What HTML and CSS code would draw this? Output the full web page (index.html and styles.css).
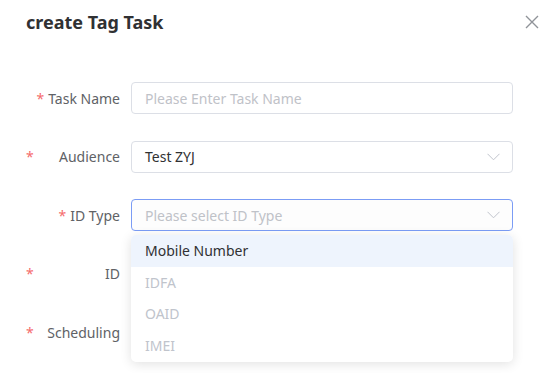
FILE: index.html
```html
<!DOCTYPE html>
<html lang="en">
<head>
<meta charset="utf-8">
<title>create Tag Task</title>
<link rel="stylesheet" href="styles.css">
</head>
<body>
<div class="dialog">
  <div class="dialog-header">
    <h2 class="dialog-title">create Tag Task</h2>
    <button class="dialog-close" aria-label="Close">
      <svg width="14" height="14" viewBox="0 0 14 14"><path d="M1 1L13 13M13 1L1 13" stroke="#909399" stroke-width="1.4" fill="none"/></svg>
    </button>
  </div>
  <form class="form">
    <div class="form-row">
      <label class="form-label"><span class="req">*</span>Task Name</label>
      <div class="field">
        <div class="input"><span class="placeholder">Please Enter Task Name</span></div>
      </div>
    </div>
    <div class="form-row">
      <label class="form-label form-label--split"><span class="req">*</span>Audience</label>
      <div class="field">
        <div class="input select"><span class="value">Test ZYJ</span>
          <svg class="chevron" width="13" height="8" viewBox="0 0 13 8"><path d="M0.5 0.8L6.5 6.8L12.5 0.8" stroke="#c0c4cc" stroke-width="1" fill="none"/></svg>
        </div>
      </div>
    </div>
    <div class="form-row">
      <label class="form-label"><span class="req">*</span>ID Type</label>
      <div class="field">
        <div class="input select is-focus"><span class="placeholder">Please select ID Type</span>
          <svg class="chevron" width="13" height="8" viewBox="0 0 13 8"><path d="M0.5 0.8L6.5 6.8L12.5 0.8" stroke="#c0c4cc" stroke-width="1" fill="none"/></svg>
        </div>
        <ul class="dropdown">
          <li class="option is-hover">Mobile Number</li>
          <li class="option is-disabled">IDFA</li>
          <li class="option is-disabled">OAID</li>
          <li class="option is-disabled">IMEI</li>
        </ul>
      </div>
    </div>
    <div class="form-row">
      <label class="form-label form-label--split"><span class="req">*</span>ID</label>
      <div class="field"><div class="input blank"></div></div>
    </div>
    <div class="form-row">
      <label class="form-label form-label--split"><span class="req">*</span>Scheduling</label>
      <div class="field"><div class="input blank"></div></div>
    </div>
  </form>
</div>
</body>
</html>
```
FILE: styles.css
```css
* { box-sizing: border-box; }
html, body { margin: 0; padding: 0; background: #fff; }
body {
  font-family: "Noto Sans", "Open Sans", Arial, sans-serif;
  color: #303133;
  width: 550px;
  height: 373px;
  overflow: hidden;
}
.dialog { position: relative; }
.dialog-header {
  display: flex;
  justify-content: space-between;
  align-items: flex-start;
  padding: 9px 11px 0 26px;
}
.dialog-title {
  margin: 0;
  font-size: 18px;
  line-height: 26px;
  font-weight: 700;
  color: #303133;
}
.dialog-close {
  border: 0;
  background: none;
  padding: 0;
  margin-top: 6px;
  width: 14px;
  height: 14px;
  display: block;
}
.dialog-close svg { display: block; }
.form { padding: 47px 37px 0 26px; }
.form-row {
  display: flex;
  align-items: flex-start;
  margin-bottom: 26.5px;
}
.form-label {
  width: 105px;
  flex: none;
  padding-right: 11px;
  display: flex;
  justify-content: flex-end;
  align-items: center;
  height: 32px;
  font-size: 14px;
  color: #606266;
}
.form-label--split { justify-content: space-between; }
.req { color: #f56c6c; margin-right: 4px; font-size: 14px; }
.field { flex: 1; position: relative; }
.input {
  height: 32px;
  border: 1px solid #dcdfe6;
  border-radius: 4px;
  display: flex;
  align-items: center;
  padding: 0 12px 0 13px;
  font-size: 14px;
  background: #fff;
}
.input.blank { border-color: transparent; }
.select { justify-content: space-between; }
.is-focus { border-color: #7b9cf5; background: #fdfdfd; }
.placeholder { color: #bfc2c8; }
.value { color: #303133; }
.chevron { display: block; margin-right: 0; }
.dropdown {
  position: absolute;
  left: 0;
  right: 0;
  top: 36px;
  margin: 0;
  padding: 0 0 1px;
  list-style: none;
  background: #fff;
  border-radius: 5px;
  box-shadow: 0 2px 12px rgba(0, 0, 0, 0.12);
  z-index: 10;
}
.option {
  height: 31.5px;
  line-height: 31.5px;
  padding: 0 14px;
  font-size: 14px;
  color: #303133;
}
.option.is-hover { background: #eef4fd; border-radius: 5px 5px 0 0; }
.option.is-disabled { color: #c0c4cc; }
```
